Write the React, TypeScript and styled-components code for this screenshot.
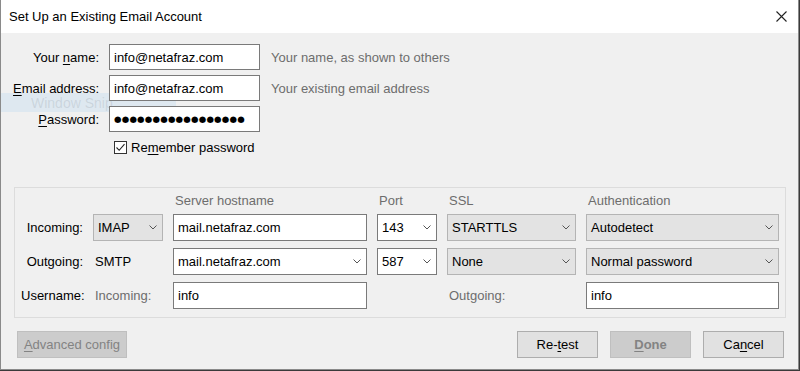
import styled, { createGlobalStyle } from "styled-components";

const GlobalStyle = createGlobalStyle`
  html, body {
    margin: 0;
    padding: 0;
    background: #3a3a3a;
  }
  body {
    font-family: "Liberation Sans", Arial, sans-serif;
    font-size: 13px;
    color: #000;
  }
`;

const Window = styled.div`
  position: relative;
  width: 797px;
  height: 369px;
  background: #f0f0f0;
  border: 1px solid #8a8a8a;
  border-top: none;
  display: flex;
  flex-direction: column;
  overflow: hidden;
`;

const TitleBar = styled.div`
  height: 33px;
  background: #fff;
  display: flex;
  align-items: center;
  justify-content: space-between;
  padding: 0 11px 0 8px;
  font-size: 13px;
  color: #000;
`;

const Body = styled.div`
  position: relative;
  flex: 1;
  display: flex;
  flex-direction: column;
`;

// leftover "Window Snip" overlay captured in the screenshot
const SnipGhost = styled.div`
  position: absolute;
  left: 0;
  top: 60px;
  width: 175px;
  height: 19px;
  background: rgba(190, 218, 240, 0.35);
  color: rgba(120, 130, 140, 0.2);
  font-size: 14px;
  line-height: 21px;
  padding-left: 30px;
  box-sizing: border-box;
  z-index: 0;
`;

const Content = styled.div`
  position: relative;
  z-index: 1;
  display: flex;
  flex-direction: column;
  flex: 1;
`;

const AccountGrid = styled.div`
  display: grid;
  grid-template-columns: 90px 151px auto;
  column-gap: 10px;
  row-gap: 5px;
  align-items: center;
  padding: 11px 0 0 8px;
`;

const Label = styled.label`
  text-align: right;
  white-space: nowrap;
`;

const Hint = styled.span`
  color: #6d6d6d;
  padding-left: 1px;
`;

const TextBox = styled.div<{ $height?: number }>`
  box-sizing: border-box;
  height: ${(p) => p.$height ?? 26}px;
  background: #fff;
  border: 1px solid #7a7a7a;
  display: flex;
  align-items: center;
  padding: 0 4px;
  white-space: nowrap;
  overflow: hidden;
`;

const Dots = styled.span`
  font-family: "DejaVu Sans", sans-serif;
  font-size: 8.6px;
  letter-spacing: 0.2px;
`;

const CheckRow = styled.div`
  grid-column: 2 / 4;
  display: flex;
  align-items: center;
  gap: 4px;
  padding: 3px 0 0 5px;
`;

const CheckBox = styled.span`
  box-sizing: border-box;
  width: 13px;
  height: 13px;
  border: 1px solid #333;
  background: #fff;
  display: flex;
  align-items: center;
  justify-content: center;
`;

const GroupBox = styled.div`
  margin: 32px 12px 0 13px;
  border: 1px solid #dcdcdc;
  padding: 6px 8px 8px 6px;
  display: grid;
  grid-template-columns: 62px 70px 194px 60px 129px 193px;
  grid-template-rows: 13px 27px 27px 27px;
  column-gap: 10px;
  row-gap: 7px;
  align-items: center;
`;

const ColHead = styled.span<{ $col: number }>`
  grid-column: ${(p) => p.$col};
  color: #6d6d6d;
  line-height: 13px;
  padding-left: 2px;
`;

const RowLabel = styled.span`
  grid-column: 1;
  text-align: right;
  white-space: nowrap;
`;

const Plain = styled.span<{ $muted?: boolean }>`
  color: ${(p) => (p.$muted ? "#6d6d6d" : "#000")};
  padding-left: 2px;
  white-space: nowrap;
`;

const Dropdown = styled.div<{ $editable?: boolean }>`
  box-sizing: border-box;
  height: 27px;
  display: flex;
  align-items: center;
  justify-content: space-between;
  padding: 0 5px 0 4px;
  background: ${(p) => (p.$editable ? "#fff" : "#e3e3e3")};
  border: 1px solid ${(p) => (p.$editable ? "#7a7a7a" : "#b4b4b4")};
  white-space: nowrap;
`;

const Footer = styled.div`
  display: flex;
  align-items: center;
  gap: 12px;
  padding: 13px 14px 0 16px;
`;

const Spacer = styled.div`
  flex: 1;
`;

const Button = styled.div<{ $width: number; $disabled?: boolean }>`
  box-sizing: border-box;
  width: ${(p) => p.$width}px;
  height: 27px;
  display: flex;
  align-items: center;
  justify-content: center;
  background: ${(p) => (p.$disabled ? "#cccccc" : "#e1e1e1")};
  border: 1px solid ${(p) => (p.$disabled ? "#bfbfbf" : "#adadad")};
  color: ${(p) => (p.$disabled ? "#838383" : "#000")};
`;

const U = styled.span`
  text-decoration: underline;
  text-underline-offset: 2px;
`;

function Chevron() {
  return (
    <svg width="8" height="5" viewBox="0 0 8 5">
      <polyline points="0.5,0.5 4,4 7.5,0.5" fill="none" stroke="#555" strokeWidth="1" />
    </svg>
  );
}

function CloseIcon() {
  return (
    <svg width="11" height="11" viewBox="0 0 11 11">
      <path d="M0.5 0.5 L10.5 10.5 M10.5 0.5 L0.5 10.5" stroke="#222" strokeWidth="1.1" />
    </svg>
  );
}

function Select({ value, editable }: { value: string; editable?: boolean }) {
  return (
    <Dropdown $editable={editable}>
      <span>{value}</span>
      <Chevron />
    </Dropdown>
  );
}

export default function App() {
  return (
    <>
      <GlobalStyle />
      <Window>
        <TitleBar>
          <span>Set Up an Existing Email Account</span>
          <CloseIcon />
        </TitleBar>
        <Body>
          <SnipGhost>Window Snip</SnipGhost>
          <Content>
            <AccountGrid>
              <Label>
                Your <U>n</U>ame:
              </Label>
              <TextBox>info@netafraz.com</TextBox>
              <Hint>Your name, as shown to others</Hint>

              <Label>
                <U>E</U>mail address:
              </Label>
              <TextBox>info@netafraz.com</TextBox>
              <Hint>Your existing email address</Hint>

              <Label>
                <U>P</U>assword:
              </Label>
              <TextBox>
                <Dots>{"●".repeat(17)}</Dots>
              </TextBox>
              <span />

              <CheckRow>
                <CheckBox>
                  <svg width="11" height="11" viewBox="0 0 11 11">
                    <polyline points="1.5,5.5 4.2,8.3 9.5,2.2" fill="none" stroke="#222" strokeWidth="1.1" />
                  </svg>
                </CheckBox>
                <span>
                  Re<U>m</U>ember password
                </span>
              </CheckRow>
            </AccountGrid>

            <GroupBox>
              <ColHead $col={3}>Server hostname</ColHead>
              <ColHead $col={4}>Port</ColHead>
              <ColHead $col={5}>SSL</ColHead>
              <ColHead $col={6}>Authentication</ColHead>

              <RowLabel>Incoming:</RowLabel>
              <Select value="IMAP" />
              <TextBox $height={27}>mail.netafraz.com</TextBox>
              <Select value="143" editable />
              <Select value="STARTTLS" />
              <Select value="Autodetect" />

              <RowLabel>Outgoing:</RowLabel>
              <Plain>SMTP</Plain>
              <Select value="mail.netafraz.com" editable />
              <Select value="587" editable />
              <Select value="None" />
              <Select value="Normal password" />

              <RowLabel>Username:</RowLabel>
              <Plain $muted>Incoming:</Plain>
              <TextBox $height={27}>info</TextBox>
              <span />
              <Plain $muted>Outgoing:</Plain>
              <TextBox $height={27}>info</TextBox>
            </GroupBox>

            <Footer>
              <Button $width={110} $disabled>
                <U>A</U>dvanced config
              </Button>
              <Spacer />
              <Button $width={81}>
                Re-<U>t</U>est
              </Button>
              <Button $width={81} $disabled>
                <b>
                  <U>D</U>one
                </b>
              </Button>
              <Button $width={81}>
                Ca<U>n</U>cel
              </Button>
            </Footer>
          </Content>
        </Body>
      </Window>
    </>
  );
}
